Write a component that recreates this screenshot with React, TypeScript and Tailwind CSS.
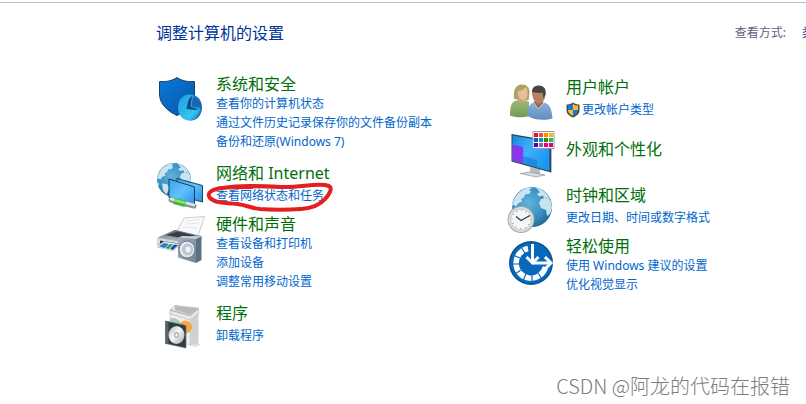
import React from "react";

interface ILink {
  name: string;
  shield?: boolean;
  circled?: boolean;
}

interface ICategory {
  title: string;
  icon: React.ReactNode;
  links: ILink[];
  className?: string;
  iconClassName?: string;
  textClassName?: string;
  linksClassName?: string;
}

function Icon({ children }: { children: React.ReactNode }) {
  return (
    <svg
      viewBox="0 0 48 48"
      className="block h-12 w-12 overflow-visible"
      aria-hidden="true"
    >
      {children}
    </svg>
  );
}

function SecurityIcon() {
  return (
    <Icon>
      <defs>
        <linearGradient id="shieldFill" x1="0" y1="0" x2="1" y2="1">
          <stop offset="0" stopColor="#0a78d8" />
          <stop offset="1" stopColor="#0656a8" />
        </linearGradient>
        <linearGradient id="pieFill" x1="0" y1="0" x2="1" y2="1">
          <stop offset="0" stopColor="#1b9fdc" />
          <stop offset="0.7" stopColor="#35c4f2" />
          <stop offset="1" stopColor="#1583bd" />
        </linearGradient>
      </defs>
      <path
        d="M21 3.500C16 7 9.500 8 3.500 7.500V20c0 10 8 17 17.500 21.500C30.500 37 38.500 30 38.500 20V7.500C32 8 26 7 21 3.500z"
        fill="url(#shieldFill)"
        stroke="#17405f"
        strokeWidth="1"
      />
      <ellipse cx="35" cy="33.500" rx="11" ry="13" fill="#1374ad" />
      <ellipse cx="33" cy="33.500" rx="11" ry="13" fill="url(#pieFill)" />
      <path d="M35 33L36.500 22C33 23 31.500 28 30.500 35z" fill="#0b4d91" />
      <path d="M35 33l1.500-11c5 1.500 8.500 6 8.500 12z" fill="#1767b4" />
      <path d="M30.500 35L35 32l9 3-5 1z" fill="#0a4a90" />
      <path d="M35 32.500l1.500-10M35 32.500l9.500 3" stroke="#49b5ea" strokeWidth="0.8" />
    </Icon>
  );
}

function Globe({ cx, cy, r, id }: { cx: number; cy: number; r: number; id: string }) {
  const transform = `translate(${cx} ${cy}) scale(${r / 20})`;
  return (
    <g transform={transform}>
      <defs>
        <radialGradient id={id} cx="0.42" cy="0.4" r="0.65">
          <stop offset="0" stopColor="#5fb4dd" />
          <stop offset="0.6" stopColor="#3b90c2" />
          <stop offset="1" stopColor="#1d6592" />
        </radialGradient>
      </defs>
      <circle r="20" fill={`url(#${id})`} />
      <g fill="#d9eef6" opacity="0.9">
        <path d="M-16-11c3-4 7-7 12-8.500l4 .5-3 2 2 1.500-2 2.500-4 .5-1 3-3 1.500 1 2.500-4 2-2 3-3-2-1.500 4 3 3-1 2.500-2-3c-.5-5 1.500-10 4.500-15z" />
        <path d="M4-19.500c5 1.500 9 4 12 8l2 4-2 1-1-3-3 1-1-3-4 1-2-3 3-1z" />
        <path d="M9-8l5-1 5 3 1 7-2 6-3 2-1-6-5-2-2-5z" />
        <path d="M-14 4l6 1 3 4-2 4-2 4-4-5z" />
      </g>
    </g>
  );
}

function NetworkIcon() {
  return (
    <Icon>
      <defs>
        <linearGradient id="netScreen" x1="0" y1="0" x2="1" y2="1">
          <stop offset="0" stopColor="#3aa6ee" />
          <stop offset="0.5" stopColor="#62c0fa" />
          <stop offset="1" stopColor="#258fe2" />
        </linearGradient>
      </defs>
      <Globe cx={18} cy={17} r={17} id="netGlobe" />
      <path
        d="M21 15.500L46.500 22.500V39L21 32z"
        fill="url(#netScreen)"
        stroke="#1b4566"
        strokeWidth="1"
      />
      <path
        d="M13 16L38.500 24V42.500L13 34.500z"
        fill="url(#netScreen)"
        stroke="#173e5e"
        strokeWidth="1"
      />
      <path d="M15 37l23 6" stroke="#8b9499" strokeWidth="5" strokeLinecap="round" />
      <path d="M15 36l23 6" stroke="#e3e7e8" strokeWidth="2.500" strokeLinecap="round" />
      <path d="M18 38l11.500 3" stroke="#3eb53b" strokeWidth="6" />
      <path d="M18 37l11.500 3" stroke="#8be079" strokeWidth="2.500" />
    </Icon>
  );
}

function PrinterIcon() {
  return (
    <Icon>
      <defs>
        <linearGradient id="speakerFill" x1="0" y1="0" x2="1" y2="1">
          <stop offset="0" stopColor="#a3b2c0" />
          <stop offset="1" stopColor="#718292" />
        </linearGradient>
        <linearGradient id="printTop" x1="0" y1="0" x2="0" y2="1">
          <stop offset="0" stopColor="#60666b" />
          <stop offset="1" stopColor="#b3b8bb" />
        </linearGradient>
      </defs>
      <path d="M28 4L48.500 2.500 42 22 21 17z" fill="#f7f9fa" stroke="#bcc3c8" strokeWidth="0.8" />
      <path d="M30 7l14-1.500M29 10l14-1M27 13l14 1" stroke="#e4e9ec" />
      <path d="M1 24l18-8 27 6-2 8-17 4L1 31z" fill="#a7adb1" />
      <path d="M2 23.500L19 16l25 6-17 5z" fill="url(#printTop)" />
      <path d="M10 21l12-3.500 17 4-12 3z" fill="#363c42" />
      <path d="M1 24l26 4v6L1 30z" fill="#d9dcde" />
      <path d="M4 26.500l22 3.500v3L4 29.500z" fill="#30363b" />
      <path d="M1 33l7-5.500 15 2.500-5 7z" fill="#eff5fa" stroke="#aeb8c0" strokeWidth="0.600" />
      <path d="M3 32.500l5-3.500 5 1-4.500 4z" fill="#2a75d1" />
      <path d="M9 34l5-4 3 .5-4 4.500z" fill="#2fa36b" />
      <path d="M14 35l4-4.500 4 .5-5 5z" fill="#1553a8" />
      <path d="M22 23.500l4-1.500 19.500.5L40 25z" fill="#ccd5dc" />
      <path d="M40 25l5.500-2.500V46L40 49z" fill="#5e707f" />
      <path d="M22 23.500l18 1.500v24l-18-5.500z" fill="url(#speakerFill)" />
      <ellipse cx="31" cy="35.500" rx="8" ry="8.500" fill="#e3e8ec" stroke="#667786" />
      <ellipse cx="31.500" cy="35.500" rx="5.500" ry="6" fill="#bec7ce" />
      <ellipse cx="32" cy="35.500" rx="2.500" ry="3" fill="#f2f5f6" />
    </Icon>
  );
}

function ProgramsIcon() {
  return (
    <Icon>
      <defs>
        <linearGradient id="discFill" x1="0" y1="0" x2="1" y2="1">
          <stop offset="0" stopColor="#aeb4b8" />
          <stop offset="0.45" stopColor="#f5f6f7" />
          <stop offset="1" stopColor="#a4abb0" />
        </linearGradient>
      </defs>
      <path d="M35 43l8-3 1 2-5 2z" fill="#dedede" />
      <path d="M14 9l20 6v27l-20-5z" fill="#eeeeee" stroke="#cccccc" strokeWidth="0.600" />
      <path d="M34 15l8.500-5v30L34 43z" fill="#cfd0d2" />
      <path d="M14 7l5-4.500 23.500 2.500V11L34 17l-20-6z" fill="#e6e6e6" stroke="#b4b6b8" strokeWidth="0.600" />
      <path d="M19 2.500V7l15 4.500 8-6z" fill="#b7babd" />
      <path d="M14 7l20 5.500 8.500-7" fill="none" stroke="#96999c" strokeWidth="0.800" />
      <path d="M14 15.500a9 9 0 0 1 11 5v5H14z" fill="#a3cfb4" />
      <circle cx="29.500" cy="24" r="6.500" fill="#f4a649" />
      <path d="M9.500 18L30 22.500V45L9.500 40.500z" fill="#333a40" stroke="#6f777d" strokeWidth="0.700" />
      <path d="M9.500 18l3 .5V41l-3-.5z" fill="#59636b" />
      <ellipse cx="20.500" cy="32" rx="8" ry="9" fill="url(#discFill)" />
      <ellipse cx="20.500" cy="32" rx="2.500" ry="3" fill="#aab3b9" />
      <ellipse cx="20.500" cy="32" rx="1.200" ry="1.500" fill="#ffffff" />
    </Icon>
  );
}

function UsersIcon() {
  return (
    <Icon>
      <defs>
        <linearGradient id="womanBody" x1="0" y1="0" x2="0" y2="1">
          <stop offset="0" stopColor="#a3bd7b" />
          <stop offset="1" stopColor="#6f9a51" />
        </linearGradient>
        <linearGradient id="manBody" x1="0" y1="0" x2="0" y2="1">
          <stop offset="0" stopColor="#8fb3dc" />
          <stop offset="1" stopColor="#5f8cc0" />
        </linearGradient>
      </defs>
      <g transform="translate(0 1)">
        <path d="M8 21c-1-8 1-14.500 8-14.500 5 0 7.500 3 7.500 8l-1 8z" fill="#a8a464" />
        <path d="M4 37.500c0-8 1-13.500 6-15l6-1.500 7 3v14c-6 2-14 1.500-19-.5z" fill="url(#womanBody)" />
        <path d="M12 22c2 3.500 5 4 7 1l-1-4h-5z" fill="#d3a081" />
        <path d="M12 13c3 0 6-2 8-4 2 3 2 9 0 12-2 2-5 1-6.500-1-1.500-2-2-4-1.500-7z" fill="#e8bd9c" />
        <path d="M21.500 38c0-7 1.500-12 6-13.500l5-2 8 3c4 2 5.500 8 6 15-8 2.500-18 1.500-25-2.500z" fill="url(#manBody)" />
        <path d="M28 24l4 7 5-6-1-5h-6z" fill="#9e6b4c" />
        <path d="M27 24l5 7 6-6" fill="none" stroke="#b4cdea" strokeWidth="1" />
        <path d="M26 15c0-4.500 2.500-7 6.500-7s7 3 7 8-3 9.500-6.500 9.500S26 20 26 15z" fill="#b68161" />
        <path d="M26 14c0-4.500 3-6.500 7-6.500 5 0 7.500 3.500 6.500 9l-2 4-1-6c-3 1-7 0-10.500-.5z" fill="#454545" />
      </g>
    </Icon>
  );
}

const swatches = [
  ["#e81123", "#ff4343", "#ff8c00", "#ffb900"],
  ["#0063b1", "#0099bc", "#498205", "#00cc6a"],
  ["#4a00c8", "#8764b8", "#e3008c", "#ea005e"],
];

function AppearanceIcon() {
  return (
    <Icon>
      <defs>
        <linearGradient id="deskScreen" x1="0" y1="0" x2="1" y2="0.600">
          <stop offset="0" stopColor="#1689df" />
          <stop offset="0.5" stopColor="#3fb1fb" />
          <stop offset="1" stopColor="#1e95ef" />
        </linearGradient>
      </defs>
      <path d="M24 37l10 2v6H24z" fill="#b5bbc0" />
      <path d="M14 43.500l10-1.500 15 3-9 2z" fill="#d7dbde" stroke="#8e979d" strokeWidth="0.700" />
      <path d="M5.500 4L45 11v31.500L5.500 31.500z" fill="#23445f" />
      <path d="M6.500 5.500L43.500 12v29L6.500 30.500z" fill="url(#deskScreen)" />
      <path d="M6.500 14.500L17 17v16.500L6.500 30.500z" fill="#8a36ef" />
      <path d="M17 26l14 4v7.500l-14-4z" fill="#1479d0" opacity="0.600" />
      <path d="M45 12l1 .5v30L45 42.500z" fill="#b3bdc4" />
      <path d="M27 1.500h21v17H27z" fill="#ffffff" stroke="#98999f" />
      {swatches.map((row, y) =>
        row.map((color, x) => (
          <rect
            key={color}
            x={28 + x * 5}
            y={3 + y * 5}
            width="4"
            height="4"
            fill={color}
          />
        ))
      )}
    </Icon>
  );
}

function ClockIcon() {
  return (
    <Icon>
      <Globe cx={26} cy={22} r={20} id="clockGlobe" />
      <circle cx="15" cy="34.500" r="13.500" fill="#a3a9ad" />
      <circle cx="15" cy="34.500" r="12.500" fill="#dce0e3" />
      <circle cx="15" cy="34.500" r="10.500" fill="#f5f7f8" stroke="#b4babe" strokeWidth="0.700" />
      <circle
        cx="15"
        cy="34.500"
        r="9"
        fill="none"
        stroke="#80888e"
        strokeWidth="1.500"
        strokeDasharray="0.700 4.012"
      />
      <path d="M10 31.500l5 4 9-5" fill="none" stroke="#33383c" strokeWidth="1.300" />
    </Icon>
  );
}

function EaseIcon() {
  return (
    <Icon>
      <circle cx="25" cy="24" r="22" fill="#0b5293" />
      <circle cx="25" cy="24" r="20.500" fill="#0868bd" />
      <path
        d="M22 9.500A15 15 0 1 0 39.500 28"
        fill="none"
        stroke="#ffffff"
        strokeWidth="5.500"
      />
      <path
        d="M19 14l-4-6M14 19l-7-3M13 25H6M15 31l-6 4M20 35l-3 7M26 36v7M32 34l4 6"
        stroke="#0868bd"
        strokeWidth="1.200"
      />
      <path d="M26.500 5v18" stroke="#ffffff" strokeWidth="3" />
      <path d="M20.500 18l6 6 6-6" fill="none" stroke="#ffffff" strokeWidth="3" />
      <path d="M26.500 24H45" stroke="#ffffff" strokeWidth="3" />
      <path d="M39 18l6 6-6 6" fill="none" stroke="#ffffff" strokeWidth="3" />
    </Icon>
  );
}

function AdminShield() {
  return (
    <svg viewBox="0 0 14 16" className="h-4 w-3.5 shrink-0" aria-hidden="true">
      <path d="M7 .5C5 2 3 2.500.5 2.500V8c0 4 3 6 6.500 7.500C10.500 14 13.500 12 13.500 8V2.500C11 2.500 9 2 7 .5z" fill="#484c50" />
      <path d="M7 2C5.500 3 4 3.500 2 3.600V8h5z" fill="#1979d8" />
      <path d="M7 2c1.500 1 3 1.500 5 1.600V8H7z" fill="#fdbc2c" />
      <path d="M2 8h5v6C4 12.500 2 11 2 8z" fill="#fdbc2c" />
      <path d="M12 8H7v6c3-1.500 5-3 5-6z" fill="#1979d8" />
    </svg>
  );
}

// hand-drawn marker ring around a link
function RedRing() {
  return (
    <svg
      viewBox="0 0 130 32"
      className="pointer-events-none absolute -top-1 -left-2.5 h-8 w-[130px] overflow-visible"
      aria-hidden="true"
    >
      <path
        d="M17 6C34 3 54 4 76 5c18 1 36-5 47-1 4 2 0 9-4 13-5 6-12 9-24 10-14 1-28 1-41 0-9-1-14-4-23-5-12-1-22-1-27-6-4-5 2-9 12-10 10-1 20-1 30-1"
        fill="none"
        stroke="#e41f20"
        strokeWidth="4"
        strokeLinecap="round"
        strokeLinejoin="round"
      />
    </svg>
  );
}

const leftCategories: ICategory[] = [
  {
    title: "系统和安全",
    icon: <SecurityIcon />,
    links: [
      { name: "查看你的计算机状态" },
      { name: "通过文件历史记录保存你的文件备份副本" },
      { name: "备份和还原(Windows 7)" },
    ],
  },
  {
    title: "网络和 Internet",
    icon: <NetworkIcon />,
    links: [{ name: "查看网络状态和任务", circled: true }],
    className: "mt-3",
    linksClassName: "mt-[3px]",
  },
  {
    title: "硬件和声音",
    icon: <PrinterIcon />,
    links: [
      { name: "查看设备和打印机" },
      { name: "添加设备" },
      { name: "调整常用移动设置" },
    ],
    className: "mt-[3px]",
  },
  {
    title: "程序",
    icon: <ProgramsIcon />,
    links: [{ name: "卸载程序" }],
    className: "mt-3",
    linksClassName: "mt-[3px]",
  },
];

const rightCategories: ICategory[] = [
  {
    title: "用户帐户",
    icon: <UsersIcon />,
    links: [{ name: "更改帐户类型", shield: true }],
    className: "mt-[3px]",
    linksClassName: "mt-[3px]",
  },
  {
    title: "外观和个性化",
    icon: <AppearanceIcon />,
    links: [],
    className: "mt-[5px]",
    textClassName: "pt-[9px]",
  },
  {
    title: "时钟和区域",
    icon: <ClockIcon />,
    links: [{ name: "更改日期、时间或数字格式" }],
    className: "mt-[7px]",
    linksClassName: "mt-[3px]",
  },
  {
    title: "轻松使用",
    icon: <EaseIcon />,
    links: [{ name: "使用 Windows 建议的设置" }, { name: "优化视觉显示" }],
    className: "mt-[3px]",
    iconClassName: "pt-[3px]",
  },
];

function Category({
  title,
  icon,
  links,
  className = "",
  iconClassName = "",
  textClassName = "",
  linksClassName = "",
}: ICategory) {
  return (
    <section className={`flex gap-3 ${className}`}>
      <div className={`shrink-0 ${iconClassName}`}>{icon}</div>
      <div className={textClassName}>
        <h2 className="text-base leading-5 whitespace-nowrap">
          <a href="#" className="text-[#00700a] hover:underline">
            {title}
          </a>
        </h2>
        {links.length > 0 && (
          <ul className={linksClassName}>
            {links.map(({ name, shield, circled }: ILink) => {
              return (
                <li
                  key={name}
                  className="relative flex items-center gap-0.5 text-xs leading-[19px] whitespace-nowrap"
                >
                  {shield && <AdminShield />}
                  <a href="#" className="text-[#0066cc] hover:underline">
                    {name}
                  </a>
                  {circled && <RedRing />}
                </li>
              );
            })}
          </ul>
        )}
      </div>
    </section>
  );
}

export default function App() {
  return (
    <div className="relative min-h-screen overflow-hidden bg-white pt-0.5 font-['Noto_Sans','Noto_Sans_CJK_SC',sans-serif]">
      <header className="flex justify-between border-t border-[#bfbfbf] pt-5 pl-39">
        <h1 className="text-base leading-5 whitespace-nowrap text-[#003399]">
          调整计算机的设置
        </h1>
        <div className="-mr-5 flex shrink-0 gap-4 text-xs leading-5 whitespace-nowrap">
          <span className="text-[#5a6478]">查看方式:</span>
          <button type="button" className="text-[#003399]">
            类别
          </button>
        </div>
      </header>
      <main className="grid grid-cols-[350px_1fr] pt-[31px] pl-39">
        <div>
          {leftCategories.map((category) => (
            <Category key={category.title} {...category} />
          ))}
        </div>
        <div>
          {rightCategories.map((category) => (
            <Category key={category.title} {...category} />
          ))}
        </div>
      </main>
      <p className="absolute right-4 bottom-1.5 text-xl leading-6 font-light whitespace-nowrap text-[#7c7c7c] font-['Noto_Sans_CJK_SC',sans-serif]">
        CSDN @阿龙的代码在报错
      </p>
    </div>
  );
}
